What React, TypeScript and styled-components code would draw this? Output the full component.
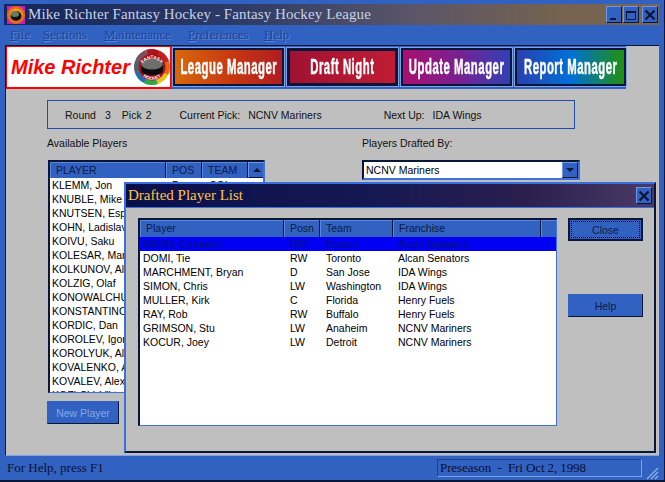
import styled, { createGlobalStyle } from 'styled-components';

const Global = createGlobalStyle`
  html, body { margin: 0; padding: 0; background: #3060c0; }
  * { box-sizing: border-box; }
`;

const BLUE = '#3162c2';
const GRAY = '#bfbfbf';
const NAVY = '#0a1638';

const Frame = styled.div`
  width: 665px;
  height: 482px;
  display: flex;
  flex-direction: column;
  background: ${BLUE};
  padding: 4px 5px 0 4px;
  border-bottom: 2px solid ${NAVY};
  border-right: 1px solid ${NAVY};
  overflow: hidden;
  font-family: 'Liberation Sans', Arial, sans-serif;
  font-size: 10.5px;
  color: #000;
`;

const TitleBar = styled.div`
  height: 21px;
  flex: none;
  display: flex;
  align-items: center;
  padding: 0 1px 0 3px;
  background: linear-gradient(90deg, #15265c 0%, #2c3a66 35%, #5a5568 62%, #75624f 85%, #7a6650 100%);
`;

const TitleText = styled.span`
  margin-left: 3px;
  font-family: 'Liberation Serif', 'Times New Roman', serif;
  font-size: 15px;
  letter-spacing: 0.1px;
  color: #c6d2e6;
  flex: 1;
  white-space: nowrap;
`;

const WinButton = styled.button<{ $gap?: number }>`
  width: 16px;
  height: 17px;
  margin-left: ${(p) => p.$gap ?? 0}px;
  padding: 0;
  display: flex;
  align-items: center;
  justify-content: center;
  background: ${BLUE};
  border: 1px solid;
  border-color: #6f97e4 ${NAVY} ${NAVY} #6f97e4;
`;

const MenuBar = styled.div`
  height: 20px;
  flex: none;
  display: flex;
  align-items: center;
  padding: 0 0 1px 6px;
  font-family: 'Liberation Serif', 'Times New Roman', serif;
  font-size: 13px;
  color: #1f4596;
  text-shadow: 1px 1px 0 #5b86d9;
`;

const MenuItem = styled.span<{ $width: number }>`
  width: ${(p) => p.$width}px;
  u { text-decoration: underline; }
`;

const Client = styled.div`
  position: relative;
  flex: 1;
  margin-left: 1px;
  background: ${GRAY};
  border-left: 1px solid ${NAVY};
  border-top: 1px solid ${NAVY};
  border-bottom: 1px solid #7ea2e6;
`;

const Toolbar = styled.div`
  height: 43px;
  display: flex;
  align-items: stretch;
  width: 620px;
  background: ${BLUE};
`;

const Logo = styled.div`
  width: 165px;
  margin-right: -1px;
  background: #fff;
  border: 1px solid #f00;
  border-bottom-width: 2px;
  display: flex;
  align-items: center;
  padding-left: 4px;
`;

const LogoText = styled.span`
  font-family: 'Liberation Sans', Arial, sans-serif;
  font-weight: bold;
  font-style: italic;
  font-size: 20px;
  color: #f00;
  white-space: nowrap;
  flex: 1;
`;

const NavButton = styled.div<{ $bg: string; $pressed?: boolean }>`
  width: 111px;
  margin: 2px 0 3px 3px;
  display: flex;
  align-items: center;
  justify-content: center;
  background: ${(p) => p.$bg};
  border: ${(p) => (p.$pressed ? 3 : 2)}px solid ${NAVY};
  outline: 1px solid #7ea2e6;
  overflow: hidden;
`;

const NavLabel = styled.span`
  display: inline-block;
  transform: scaleX(0.516);
  font-family: 'Liberation Sans', Arial, sans-serif;
  font-weight: bold;
  font-size: 22px;
  letter-spacing: 1px;
  -webkit-text-stroke: 0.5px #fff;
  color: #fff;
  white-space: nowrap;
`;

const InfoPanel = styled.div`
  width: 528px;
  height: 29px;
  margin: 11px 0 0 41px;
  display: flex;
  align-items: center;
  border: 1px solid #1f4ea8;
  color: #111;
`;

const InfoItem = styled.span<{ $left: number }>`
  margin-left: ${(p) => p.$left}px;
  white-space: nowrap;
`;

const Columns = styled.div`
  display: flex;
  margin: 6px 0 0 41px;
`;

const LeftColumn = styled.div`
  width: 315px;
`;

const RightColumn = styled.div`
  flex: 1;
`;

const Label = styled.div`
  height: 16px;
  line-height: 16px;
  margin-bottom: 9px;
  color: #111;
`;

const PlayerList = styled.div`
  width: 217px;
  height: 233px;
  margin-left: 1px;
  border: 2px solid ${NAVY};
  border-right-color: #3f72d8;
  border-bottom: 1px solid #3f72d8;
  background: #fff;
  overflow: hidden;
`;

const HeaderRow = styled.div<{ $columns: string; $height: number }>`
  display: grid;
  grid-template-columns: ${(p) => p.$columns};
  height: ${(p) => p.$height}px;
  background: ${NAVY};
  gap: 1px;
`;

const HeaderCell = styled.div`
  background: ${BLUE};
  border-top: 1px solid #5b86d9;
  border-left: 1px solid #5b86d9;
  padding-left: 5px;
  line-height: 15px;
  color: #0c1a44;
  white-space: nowrap;
  overflow: hidden;
`;

const ScrollUp = styled.div`
  background: ${BLUE};
  display: flex;
  align-items: center;
  justify-content: center;
  border: 1px solid;
  border-color: #6f97e4 ${NAVY} ${NAVY} #6f97e4;
`;

const Arrow = styled.span<{ $down?: boolean }>`
  width: 0;
  height: 0;
  border-left: 4px solid transparent;
  border-right: 4px solid transparent;
  ${(p) => (p.$down ? `border-top: 4px solid ${NAVY};` : `border-bottom: 4px solid ${NAVY};`)}
`;

const ListRow = styled.div`
  display: grid;
  grid-template-columns: 120px 37px 40px;
  height: 14px;
  line-height: 14px;
  padding-left: 2px;
  white-space: nowrap;
`;

const WinBtn = styled.div<{ $disabled?: boolean; $marginTop?: number; $focused?: boolean; $width: number }>`
  width: ${(p) => p.$width}px;
  height: 23px;
  flex: none;
  margin-top: ${(p) => p.$marginTop ?? 0}px;
  display: flex;
  align-items: center;
  justify-content: center;
  background: ${BLUE};
  border: 1px solid;
  border-color: ${BLUE} ${NAVY} ${NAVY} ${BLUE};
  ${(p) => (p.$focused ? `border: 2px solid ${NAVY};` : '')}
  color: ${(p) => (p.$disabled ? '#86a6e4' : '#0c1a44')};
  position: relative;
  &::after {
    content: '';
    display: ${(p) => (p.$focused ? 'block' : 'none')};
    position: absolute;
    inset: 1px;
    border: 1px dotted #000;
  }
`;

const Combo = styled.div`
  width: 218px;
  height: 20px;
  display: flex;
  align-items: center;
  justify-content: space-between;
  background: #fff;
  border: 2px solid ${NAVY};
  border-right-color: #3f72d8;
  border-bottom-color: #3f72d8;
  padding-left: 2px;
`;

const ComboButton = styled.div`
  width: 16px;
  height: 16px;
  display: flex;
  align-items: center;
  justify-content: center;
  background: ${BLUE};
  border: 1px solid;
  border-color: #6f97e4 ${NAVY} ${NAVY} #6f97e4;
`;

const Dialog = styled.div`
  position: absolute;
  left: 118px;
  top: 136px;
  width: 532px;
  height: 271px;
  display: flex;
  flex-direction: column;
  background: ${GRAY};
  border: 2px solid #3a70dc;
  border-right-color: ${NAVY};
  border-bottom-color: ${NAVY};
`;

const DialogTitle = styled.div`
  height: 24px;
  flex: none;
  display: flex;
  align-items: center;
  justify-content: space-between;
  padding: 0 2px 0 2px;
  background: linear-gradient(90deg, #0a0f4a 0%, #141852 45%, #2a1e4e 75%, #4a3a66 100%);
  border-bottom: 1px solid #3a70dc;
`;

const DialogTitleText = styled.span`
  font-family: 'Liberation Serif', 'Times New Roman', serif;
  font-size: 15px;
  color: #ffc445;
`;

const DialogBody = styled.div`
  flex: 1;
  display: flex;
  padding: 10px 0 0 12px;
`;

const DraftList = styled.div`
  width: 419px;
  height: 208px;
  flex: none;
  background: #fff;
  border: 2px solid ${NAVY};
  border-right-color: #3f72d8;
  border-bottom-color: #3f72d8;
  border-right-width: 1px;
  border-bottom-width: 1px;
  overflow: hidden;
`;

const DraftRow = styled.div<{ $selected?: boolean; $columns: string }>`
  display: grid;
  grid-template-columns: ${(p) => p.$columns};
  height: 14px;
  line-height: 14px;
  background: ${(p) => (p.$selected ? '#0000f5' : 'transparent')};
  color: ${(p) => (p.$selected ? '#00107a' : '#000')};
`;

const DraftCell = styled.span`
  padding-left: 3px;
  white-space: nowrap;
`;

const DialogButtons = styled.div`
  margin-left: 11px;
  display: flex;
  flex-direction: column;
`;

const StatusBar = styled.div`
  height: 24px;
  flex: none;
  position: relative;
  display: flex;
  align-items: center;
  justify-content: space-between;
  padding: 0 17px 0 3px;
  font-family: 'Liberation Serif', 'Times New Roman', serif;
  font-size: 13px;
  color: #0a1030;
`;

const StatusPane = styled.div`
  width: 205px;
  height: 18px;
  display: flex;
  align-items: center;
  padding-left: 2px;
  border: 1px solid;
  border-color: #1f3f88 #7ea2e6 #7ea2e6 #1f3f88;
  letter-spacing: -0.1px;
  white-space: pre;
`;

const Grip = styled.svg`
  position: absolute;
  right: 0;
  bottom: 0;
`;

const players = [
  { name: 'KLEMM, Jon', pos: 'D', team: 'COL' },
  { name: 'KNUBLE, Mike' },
  { name: 'KNUTSEN, Espen' },
  { name: 'KOHN, Ladislav' },
  { name: 'KOIVU, Saku' },
  { name: 'KOLESAR, Mark' },
  { name: 'KOLKUNOV, Alexei' },
  { name: 'KOLZIG, Olaf' },
  { name: 'KONOWALCHUK, Steve' },
  { name: 'KONSTANTINOV, Vladimir' },
  { name: 'KORDIC, Dan' },
  { name: 'KOROLEV, Igor' },
  { name: 'KOROLYUK, Alexander' },
  { name: 'KOVALENKO, Andrei' },
  { name: 'KOVALEV, Alex' },
  { name: 'KOZLOV, Viktor' },
];

const drafted = [
  ['MANN, Cameron', 'RW', 'Boston', 'Alcan Senators'],
  ['DOMI, Tie', 'RW', 'Toronto', 'Alcan Senators'],
  ['MARCHMENT, Bryan', 'D', 'San Jose', 'IDA Wings'],
  ['SIMON, Chris', 'LW', 'Washington', 'IDA Wings'],
  ['MULLER, Kirk', 'C', 'Florida', 'Henry Fuels'],
  ['RAY, Rob', 'RW', 'Buffalo', 'Henry Fuels'],
  ['GRIMSON, Stu', 'LW', 'Anaheim', 'NCNV Mariners'],
  ['KOCUR, Joey', 'LW', 'Detroit', 'NCNV Mariners'],
];

const LIST_COLUMNS = '115px 35px 45px 17px';
const DRAFT_COLUMNS = '143px 35px 72px 147px 16px';
const DRAFT_ROW_COLUMNS = '147px 36px 72px 148px';

// colour wheel round the puck
const ringColours = ['#b0121e', '#c8201c', '#e06a10', '#e8c018', '#30a848', '#2070b0', '#50606c', '#7a5060'];
const RING_LENGTH = 2 * Math.PI * 15.5;

const Puck = () => (
  <svg width="36" height="36" viewBox="0 0 36 36">
    <defs>
      <path id="arcTop" d="M7 18 A11.5 11.5 0 0 1 29 18" />
      <path id="arcBottom" d="M4.5 20 A13.8 13.8 0 0 0 31.5 20" />
    </defs>
    {ringColours.map((colour, i) => (
      <circle
        key={colour}
        cx="18"
        cy="18"
        r="15.5"
        fill="none"
        stroke={colour}
        strokeWidth="5"
        strokeDasharray={`${RING_LENGTH / 8 + 0.4} ${RING_LENGTH}`}
        strokeDashoffset={-(RING_LENGTH / 8) * i}
        transform="rotate(-110 18 18)"
      />
    ))}
    <circle cx="18" cy="18" r="13.5" fill="#a8101c" />
    <ellipse cx="18" cy="21.5" rx="11" ry="5" fill="#0c0c0c" />
    <rect x="7" y="15" width="22" height="6.5" fill="#0c0c0c" />
    <ellipse cx="18" cy="15" rx="11" ry="5.5" fill="#6e6e6e" />
    <text fontFamily="'Liberation Sans', sans-serif" fontSize="4.6" fontWeight="bold" fill="#fff">
      <textPath href="#arcTop" startOffset="50%" textAnchor="middle">FANTASY</textPath>
    </text>
    <text fontFamily="'Liberation Sans', sans-serif" fontSize="4.6" fontWeight="bold" fill="#fff">
      <textPath href="#arcBottom" startOffset="50%" textAnchor="middle">HOCKEY</textPath>
    </text>
  </svg>
);

const AppIcon = () => (
  <svg width="18" height="18" viewBox="0 0 18 18">
    <rect width="18" height="18" fill="#c020c0" />
    <circle cx="9" cy="9" r="9" fill="#e86a10" />
    <circle cx="9" cy="9" r="6.5" fill="#f0a020" />
    <ellipse cx="9" cy="10" rx="5.5" ry="5" fill="#111" />
    <ellipse cx="8" cy="8" rx="4" ry="3" fill="#707868" />
  </svg>
);

const CloseGlyph = () => (
  <svg width="12" height="12" viewBox="0 0 12 12">
    <path d="M1.5 1.5 L10.5 10.5 M10.5 1.5 L1.5 10.5" stroke={NAVY} strokeWidth="2.4" />
  </svg>
);

export default function App() {
  return (
    <>
      <Global />
      <Frame>
        <TitleBar>
          <AppIcon />
          <TitleText>Mike Richter Fantasy Hockey - Fantasy Hockey League</TitleText>
          <WinButton>
            <svg width="12" height="12" viewBox="0 0 12 12"><rect x="2" y="9" width="6" height="2" fill={NAVY} /></svg>
          </WinButton>
          <WinButton $gap={1}>
            <svg width="12" height="12" viewBox="0 0 12 12"><path d="M1.5 2.5 H10.5 V10.5 H1.5 Z" fill="none" stroke={NAVY} /><rect x="1" y="2" width="10" height="2" fill={NAVY} /></svg>
          </WinButton>
          <WinButton $gap={3}><CloseGlyph /></WinButton>
        </TitleBar>
        <MenuBar>
          <MenuItem $width={33}><u>F</u>ile</MenuItem>
          <MenuItem $width={61}><u>S</u>ections</MenuItem>
          <MenuItem $width={84}><u>M</u>aintenance</MenuItem>
          <MenuItem $width={76}><u>P</u>references</MenuItem>
          <MenuItem $width={40}><u>H</u>elp</MenuItem>
        </MenuBar>
        <Client>
          <Toolbar>
            <Logo>
              <LogoText>Mike Richter</LogoText>
              <Puck />
            </Logo>
            <NavButton $bg="linear-gradient(90deg, #d8680c, #c83a10 50%, #b01c20)"><NavLabel>League Manager</NavLabel></NavButton>
            <NavButton $pressed $bg="linear-gradient(90deg, #a01232, #c01c34)"><NavLabel>Draft Night</NavLabel></NavButton>
            <NavButton $bg="linear-gradient(90deg, #a81070, #7a2090 50%, #3040b4)"><NavLabel>Update Manager</NavLabel></NavButton>
            <NavButton $bg="linear-gradient(90deg, #2a40b0, #0070d8 50%, #209010)"><NavLabel>Report Manager</NavLabel></NavButton>
          </Toolbar>
          <InfoPanel>
            <InfoItem $left={17}>Round</InfoItem>
            <InfoItem $left={9}>3</InfoItem>
            <InfoItem $left={11}>Pick</InfoItem>
            <InfoItem $left={4}>2</InfoItem>
            <InfoItem $left={28}>Current Pick:</InfoItem>
            <InfoItem $left={8}>NCNV Mariners</InfoItem>
            <InfoItem $left={62}>Next Up:</InfoItem>
            <InfoItem $left={8}>IDA Wings</InfoItem>
          </InfoPanel>
          <Columns>
            <LeftColumn>
              <Label>Available Players</Label>
              <PlayerList>
                <HeaderRow $columns={LIST_COLUMNS} $height={16}>
                  <HeaderCell>PLAYER</HeaderCell>
                  <HeaderCell>POS</HeaderCell>
                  <HeaderCell>TEAM</HeaderCell>
                  <ScrollUp><Arrow /></ScrollUp>
                </HeaderRow>
                {players.map((p) => (
                  <ListRow key={p.name}>
                    <span>{p.name}</span>
                    <span>{p.pos}</span>
                    <span>{p.team}</span>
                  </ListRow>
                ))}
              </PlayerList>
              <WinBtn $disabled $marginTop={8} $width={72}>New Player</WinBtn>
            </LeftColumn>
            <RightColumn>
              <Label>Players Drafted By:</Label>
              <Combo>
                NCNV Mariners
                <ComboButton><Arrow $down /></ComboButton>
              </Combo>
            </RightColumn>
          </Columns>
          <Dialog>
            <DialogTitle>
              <DialogTitleText>Drafted Player List</DialogTitleText>
              <WinButton><CloseGlyph /></WinButton>
            </DialogTitle>
            <DialogBody>
              <DraftList>
                <HeaderRow $columns={DRAFT_COLUMNS} $height={17}>
                  <HeaderCell>Player</HeaderCell>
                  <HeaderCell>Posn</HeaderCell>
                  <HeaderCell>Team</HeaderCell>
                  <HeaderCell>Franchise</HeaderCell>
                  <HeaderCell />
                </HeaderRow>
                {drafted.map((row, i) => (
                  <DraftRow key={row[0]} $selected={i === 0} $columns={DRAFT_ROW_COLUMNS}>
                    {row.map((cell) => (
                      <DraftCell key={cell}>{cell}</DraftCell>
                    ))}
                  </DraftRow>
                ))}
              </DraftList>
              <DialogButtons>
                <WinBtn $focused $width={75}>Close</WinBtn>
                <WinBtn $marginTop={53} $width={75}>Help</WinBtn>
              </DialogButtons>
            </DialogBody>
          </Dialog>
        </Client>
        <StatusBar>
          <span>For Help, press F1</span>
          <StatusPane>{'Preseason  -  Fri Oct 2, 1998'}</StatusPane>
          <Grip width="14" height="14" viewBox="0 0 14 14">
            <path d="M13 2 L2 13 M13 6 L6 13 M13 10 L10 13" stroke="#8fb0ec" strokeWidth="1.2" />
          </Grip>
        </StatusBar>
      </Frame>
    </>
  );
}
